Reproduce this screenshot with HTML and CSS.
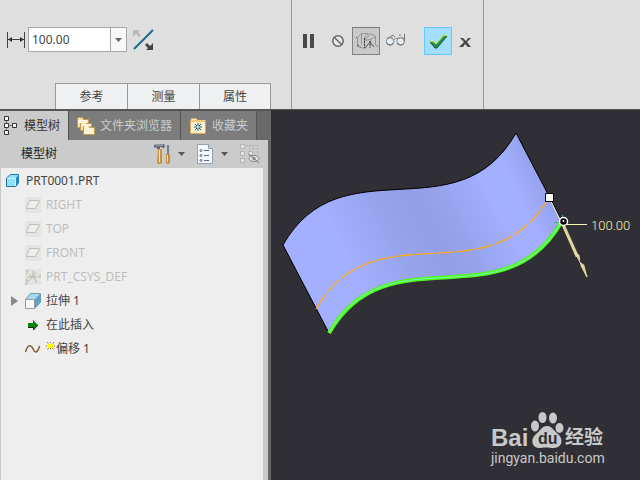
FILE: index.html
```
<!DOCTYPE html>
<html lang="zh-CN">
<head>
<meta charset="utf-8">
<title>PRT0001.PRT</title>
<link rel="stylesheet" href="styles.css">
</head>
<body>
<header class="ribbon">
  <section class="options">
    <div class="controls">
      <svg class="dim-icon" width="20" height="24" viewBox="0 0 20 24" aria-hidden="true"><path d="M1.500 5v16M18.500 5v16M2 12.500h16" stroke="#444" fill="none"/><path d="M2 12.500l4-2.500v5zM18 12.500l-4-2.500v5z" fill="#333"/></svg>
      <div class="combo">
        <input type="text" value="100.00" aria-label="偏移值">
        <button type="button" aria-label="最近值"><svg width="7" height="4" viewBox="0 0 7 4"><path d="M0 0h7L3.500 4z" fill="#666"/></svg></button>
      </div>
      <button type="button" class="flip" aria-label="反向"><svg width="22" height="24" viewBox="0 0 22 24"><path d="M1 22L20 3" stroke="#1b6c92" stroke-width="2"/><path d="M0 3h7L5 5l3 3-2 2-3-3-3 3z" fill="#b8b8b8"/><path d="M20 23h-7l2-2-3-3 2-2 3 3 3-3z" fill="#444"/></svg></button>
    </div>
    <nav class="panels">
      <button type="button">参考</button>
      <button type="button">测量</button>
      <button type="button">属性</button>
    </nav>
  </section>
  <section class="actions">
    <button type="button" aria-label="暂停"><svg width="28" height="28" viewBox="0 0 28 28"><path d="M7 7h4v14H7zM14 7h4v14h-4z" fill="#4a4a4a"/></svg></button>
    <button type="button" aria-label="无预览"><svg width="28" height="28" viewBox="0 0 28 28"><circle cx="14" cy="14" r="5.200" fill="#e8e8e8" stroke="#666" stroke-width="1.500"/><path d="M10 10l8 8" stroke="#666" stroke-width="1.500"/></svg></button>
    <button type="button" class="pressed" aria-label="附着预览"><svg width="26" height="26" viewBox="0 0 26 26"><g fill="none" stroke="#888"><path d="M4.500 9.500l4-4h7l-4 4v11l-7-2zM8.500 5.500v11M11.500 12.500l6-7 5 3-5 3zM17.500 11.500v7M22.500 9v8l3 2" stroke-width=".8"/><path d="M4 9l-1 1M12 20l5-6 4 5" stroke="#555"/><path d="M11.500 10v10M4.500 17l3 2M17 13v7" stroke="#444" stroke-dasharray="2 1"/></g></svg></button>
    <button type="button" aria-label="眼镜预览"><svg width="28" height="28" viewBox="0 0 28 28"><path d="M7 12l6-4 2 2M20 9V7M24.500 7v8M14 13c1-2 2-2 4-1M7 11h6M18 11h6" fill="none" stroke="#777"/><circle cx="10" cy="14.500" r="3.700" fill="#e4edf5" stroke="#8c8c8c"/><circle cx="20.500" cy="14.500" r="3.700" fill="#e4edf5" stroke="#8c8c8c"/><path d="M7 16c2 3 5 2 6 0M18 16c2 3 5 2 6 0" fill="none" stroke="#666"/></svg></button>
    <button type="button" class="accept" aria-label="确定"><svg width="26" height="26" viewBox="0 0 26 26"><path d="M4 13h4l3 3 8-9h4L12 20h-2z" fill="#258e5c"/><path d="M5 14l5 6h2L22 8" fill="none" stroke="#155438"/><path d="M4 13.500h4l3 2.500 8-8.500h4" fill="none" stroke="#cbea08"/></svg></button>
    <button type="button" aria-label="取消"><svg width="28" height="28" viewBox="0 0 28 28"><path d="M8 11h3l3 3 2-3h3l-4 4 4 5h-3l-3-3-2 3H7l5-5z" fill="#444"/></svg></button>
  </section>
</header>
<main class="workspace">
  <aside class="navigator">
    <nav class="tabs">
      <button type="button" class="tab tab-tree active"><svg width="16" height="20" viewBox="0 0 16 20"><path d="M3.500 2v16M4 9.500h9" stroke="#777"/><path d="M1.500.500h4v4h-4zM1.500 7.500h4v4h-4zM1.500 14.500h4v4h-4zM9.500 7.500h4v4h-4z" fill="#fff" stroke="#333"/></svg><span>模型树</span></button>
      <button type="button" class="tab tab-folders"><svg width="20" height="20" viewBox="0 0 20 20"><g stroke="#c19a55" fill="#fbe0a8"><path d="M1.500 2.500l1-1h4l1 2h5v8h-11z"/><path d="M4.500 6.500l1-1h4l1 2h5v7h-11z"/><path d="M7.500 10.500l1-1h4l1 2h5v7h-11z" fill="#fff2d2"/></g><path d="M2 4h9v3H2zM5 8h9v2H5z" fill="#fff5db"/></svg><span>文件夹浏览器</span></button>
      <button type="button" class="tab tab-favorites"><svg width="18" height="18" viewBox="0 0 18 18"><path d="M1.500 3.500l1-2h5l1 2h8v13h-15z" fill="#fff0cd" stroke="#d1a960"/><path d="M2 4h14" stroke="#f3c976" stroke-width="2"/><path d="M9 6v8M5 10h8M6 7l6 6M12 7l-6 6" stroke="#07637b"/><circle cx="9" cy="10" r="1" fill="#fff"/></svg><span>收藏夹</span></button>
    </nav>
    <div class="tree-head">
      <h1>模型树</h1>
      <button type="button" class="tool" aria-label="设置"><svg width="20" height="22" viewBox="0 0 20 22"><path d="M2 5V2l3-1h7l1 2-1 2h-2V4H8v2H5L4 4z" fill="#656b7b"/><path d="M4 2h7" stroke="#bbc2cc"/><path d="M6 6h4v14l-1 1H6l-1-1z" fill="#c9943e"/><path d="M7.500 7v12" stroke="#ffe0a2"/><path d="M15 2h2v9h-2z" fill="#767d88"/><path d="M14 11h4v9l-2 1-2-1z" fill="#c58d38"/><path d="M15.500 12v7" stroke="#ffe0a2"/></svg><svg class="arrow" width="7" height="4" viewBox="0 0 7 4"><path d="M0 0h7L3.500 4z" fill="#555"/></svg></button>
      <button type="button" class="tool" aria-label="显示"><svg width="20" height="22" viewBox="0 0 20 22"><path d="M2.500 1.500h11l4 4v15h-15z" fill="#f4f9fc" stroke="#92a2ae"/><path d="M13.500 1.500v4h4" fill="#c5d7e4" stroke="#92a2ae"/><path d="M9 7.500h5M9 12.500h5M9 17.500h5" stroke="#667"/><g fill="#fff" stroke="#667"><circle cx="6" cy="7.500" r="1"/><circle cx="6" cy="12.500" r="1"/><circle cx="6" cy="17.500" r="1"/></g></svg><svg class="arrow" width="7" height="4" viewBox="0 0 7 4"><path d="M0 0h7L3.500 4z" fill="#555"/></svg></button>
      <button type="button" class="tool" aria-label="隐藏项"><svg width="22" height="22" viewBox="0 0 22 22"><g fill="#e2e2e2" stroke="#b3b3b3"><path d="M2.500 1.500h4v4h-4zM2.500 8.500h4v4h-4zM2.500 15.500h4v4h-4zM10.500 8.500h4v4h-4z"/></g><path d="M8 2.500h12M11.500 2v5M15.500 2v5M19.500 2v9" stroke="#b5b5b5" stroke-dasharray="2 1"/><ellipse cx="16" cy="15.500" rx="5" ry="3" fill="#ddd" stroke="#888"/><circle cx="16" cy="15.500" r="1.500" fill="#888"/><path d="M11 11l10 9" stroke="#777"/></svg></button>
    </div>
    <ul class="tree">
      <li class="root"><svg width="16" height="16" viewBox="0 0 16 16"><path d="M1.500 5l4-3.500h8v8L11 13.500H1.500z" fill="#8fe2fb" stroke="#247799"/><path d="M11 5l2.500-3v8L11 13z" fill="#258eb8"/><path d="M2 5.500h8.500V13" fill="none" stroke="#c8f2ff"/></svg><span>PRT0001.PRT</span></li>
      <li class="muted"><svg width="16" height="16" viewBox="0 0 16 16"><path d="M0 0h16v16H0z" fill="#e4e4e2"/><path d="M4.500 3.500h10l-4 8h-9z" fill="#eee" stroke="#c1bfaf"/></svg><span>RIGHT</span></li>
      <li class="muted"><svg width="16" height="16" viewBox="0 0 16 16"><path d="M0 0h16v16H0z" fill="#e4e4e2"/><path d="M4.500 3.500h10l-4 8h-9z" fill="#eee" stroke="#c1bfaf"/></svg><span>TOP</span></li>
      <li class="muted"><svg width="16" height="16" viewBox="0 0 16 16"><path d="M0 0h16v16H0z" fill="#e4e4e2"/><path d="M4.500 3.500h10l-4 8h-9z" fill="#eee" stroke="#c1bfaf"/></svg><span>FRONT</span></li>
      <li class="muted"><svg width="16" height="16" viewBox="0 0 16 16"><path d="M0 0h16v16H0z" fill="#e4e4e2"/><path d="M8 2v5l-5 6M8 7l4 7M4 5l4 3 3-5M2 8h10M13 6l3 3M16 6l-3 3M1 1l1 2 2-2M2 3v2M0 11h3l-3 4h3" fill="none" stroke="#bbb9a6"/></svg><span>PRT_CSYS_DEF</span></li>
      <li class="feature"><button type="button" class="expand" aria-label="展开"><svg width="7" height="10" viewBox="0 0 7 10"><path d="M0 0l7 5-7 5z" fill="#888"/></svg></button><svg width="16" height="16" viewBox="0 0 16 16"><path d="M.500 6.500l5-6h10v9l-6 6z" fill="#a9d9ee" stroke="#7896a6"/><path d="M10 6l5-5v8l-5 6z" fill="#55a4cb"/><path d="M.500 6.500h9v9h-9z" fill="#fafafa" stroke="#999"/></svg><span>拉伸 1</span></li>
      <li><svg width="16" height="16" viewBox="0 0 16 16"><path d="M3 6h5V3l5 5-5 5v-3H3z" fill="#078507"/><path d="M3 10.500h5.500v2.500l4.500-5" fill="none" stroke="#222"/></svg><span>在此插入</span></li>
      <li><svg width="16" height="16" viewBox="0 0 16 16"><path d="M.500 11c1-4 3-7 5-6 3 1 3 6 5 6s3-2 4-6" fill="none" stroke="#806337" stroke-width="1.500"/></svg><svg class="spark" width="9" height="16" viewBox="0 0 9 16"><path d="M4.500 1v8M0 5h9M1 1l7 8M8 1L1 9" stroke="#806f00" stroke-dasharray="1 1"/><path d="M2 3h5v4H2z" fill="#ff0"/></svg><span>偏移 1</span></li>
    </ul>
  </aside>
  <section class="viewport" aria-label="图形窗口">
    <svg class="scene" width="369" height="370" viewBox="271 110 369 370">
      <defs>
        <linearGradient id="shade" gradientUnits="userSpaceOnUse" x1="306" y1="289" x2="535" y2="169">
          <stop offset="0" stop-color="#a3afff"/><stop offset=".2" stop-color="#a3afff"/><stop offset=".38" stop-color="#98a5ee"/><stop offset=".53" stop-color="#929fe5"/><stop offset=".65" stop-color="#98a5ee"/><stop offset=".8" stop-color="#a3afff"/><stop offset=".9" stop-color="#a3afff"/><stop offset="1" stop-color="#96a3ed"/>
        </linearGradient>
        <path id="edge" d="M283 245C341 143 458 236 516 133"/>
      </defs>
      <path d="M283 245C341 143 458 236 516 133L562 221C504 324 387 231 329 333Z" fill="url(#shade)" stroke="#000"/>
      <use href="#edge" x="33" y="64" fill="none" stroke="#ffaa14" stroke-width="1.300" stroke-dasharray="18 2"/>
      <use href="#edge" x="46" y="88" fill="none" stroke="#50f81c" stroke-width="4"/>
      <use href="#edge" x="46" y="88" fill="none" stroke="#7af8b8"/>
      <path d="M549 197l38 80M562 224.500h25" stroke="#fbf0b8" fill="none"/>
      <path d="M562 225l3 1 13 29-2 2zM575 253l4 2 1 5-3-3zM581 263l3 2 3 12-6-11z" fill="#ddd29a" stroke="#fbf0b8" stroke-width=".5"/>
      <path d="M545.500 193.500h8v8h-8z" fill="#fff" stroke="#000"/>
      <circle cx="563.500" cy="221.500" r="4" fill="#000" stroke="#fff" stroke-width="1.500"/><circle cx="563.500" cy="221" r="1" fill="#fff"/>
      <path d="M554 222.500h5M562.500 215v2" stroke="#43a999"/>
      <text class="dimension" x="591" y="230">100.00</text>
    </svg>
    <svg class="watermark" width="122" height="60" viewBox="488 408 122 60">
      <text class="brand" x="491" y="446">Bai</text>
      <g fill="#c8c8c8"><ellipse cx="535" cy="426" rx="4" ry="5.500"/><ellipse cx="542.500" cy="417.500" rx="4" ry="5.500"/><ellipse cx="553" cy="418" rx="4" ry="5.500"/><ellipse cx="559.500" cy="428" rx="4" ry="5"/><path d="M547 426c5 0 7 5 11 8 6 5 4 14-4 14-4 0-9-1-13 0-9 1-11-8-6-13 5-4 7-9 12-9z"/></g>
      <text class="brand-du" x="538" y="444">du</text>
      <text class="brand-cn" x="565" y="444">经验</text>
      <text class="url" x="491" y="463">jingyan.baidu.com</text>
    </svg>
  </section>
</main>
</body>
</html>
```
FILE: styles.css
```
* { box-sizing: border-box; }
body {
  margin: 0;
  min-height: 100vh;
  display: flex;
  flex-direction: column;
  font: 12px/24px "Noto Sans", "Noto Sans CJK SC", sans-serif;
  color: #444;
  background: #302f35;
}
button {
  margin: 0;
  padding: 0;
  border: 0;
  background: none;
  font: inherit;
  color: inherit;
}
svg { display: block; flex: none; }

.ribbon {
  display: flex;
  background: #dfdfdf;
  border-bottom: 1px solid #555;
}
.options {
  flex: none;
  padding-top: 27px;
  padding-right: 20px;
  border-right: 1px solid #999;
}
.controls {
  display: flex;
  height: 56px;
  align-items: flex-start;
  padding-left: 6px;
}
.combo {
  display: flex;
  width: 99px;
  height: 25px;
  margin: 0 6px 0 2px;
  border: 1px solid #a8a8a8;
  background: #fff;
}
.combo input {
  flex: 1;
  min-width: 0;
  padding: 0 3px;
  border: 0;
  font: inherit;
  color: #444;
  background: none;
}
.combo button {
  display: grid;
  place-items: center;
  width: 16px;
  border-left: 1px solid #a8a8a8;
  background: #f8f8f8;
}
.panels { display: flex; margin-left: 55px; }
.panels button {
  width: 72px;
  height: 26px;
  border: 1px solid #999;
  border-right-width: 0;
  border-bottom-width: 0;
  background: #eef0f2;
}
.panels button:last-child { border-right-width: 1px; }
.actions {
  display: flex;
  align-items: flex-start;
  padding: 27px 3px 0 4px;
  border-right: 1px solid #999;
}
.actions button { width: 28px; height: 28px; }
.actions .pressed { border: 1px solid #808080; background: #c9c9cb; }
.actions .accept {
  margin-left: 16px;
  border: 1px solid #66c8ff;
  background: #a3ddff;
}

.workspace { flex: 1; display: flex; }
.navigator {
  flex: none;
  width: 271px;
  display: flex;
  flex-direction: column;
  background: #cbcbcb;
  border-right: 3px solid #666;
}
.tabs {
  display: flex;
  height: 30px;
  background: #6a6a6a;
  border-top: 1px solid #555;
  margin-right: -3px;
}
.tab {
  display: flex;
  align-items: center;
  gap: 4px;
  color: #ccc;
  background: #7c7c7c;
  border-right: 1px solid #555;
}
.tab.active { color: #333; background: #cbcbcb; }
.tab-tree { width: 69px; padding-left: 3px; gap: 5px; }
.tab-folders { width: 112px; padding-left: 7px; }
.tab-favorites { width: 76px; padding-left: 8px; gap: 5px; }
.tree-head {
  display: flex;
  align-items: center;
  height: 28px;
  padding-right: 8px;
}
.tree-head h1 {
  flex: 1;
  margin: 0;
  padding-left: 21px;
  font: inherit;
  color: #222;
}
.tool { display: flex; align-items: center; }
.tool .arrow { margin: 0 10px 0 6px; }
.tree {
  flex: 1;
  margin: 0 5px 0 1px;
  padding: 1px 0 0;
  list-style: none;
  background: #eee;
}
.tree li {
  display: flex;
  align-items: center;
  gap: 5px;
  height: 24px;
  padding-left: 24px;
}
.tree .root { padding-left: 4px; }
.tree .muted { color: #bebebe; }
.tree .feature { padding-left: 10px; }
.expand { width: 9px; }
.spark + span { margin-left: -4px; }

.viewport {
  position: relative;
  flex: 1;
  min-width: 0;
  overflow: hidden;
  background: #302f35;
}
.dimension { font: 300 13px Roboto, sans-serif; fill: #fbf0b8; }
.watermark { position: absolute; right: 30px; bottom: 12px; }
.watermark text { fill: #c8c8c8; }
.brand { font: bold 24px "Liberation Sans", sans-serif; }
.watermark .brand-du { font: bold 16px "Liberation Sans", sans-serif; fill: #302f35; }
.brand-cn { font: bold 19px "Noto Sans CJK SC", sans-serif; }
.url { font: 14px Roboto, sans-serif; }
```
